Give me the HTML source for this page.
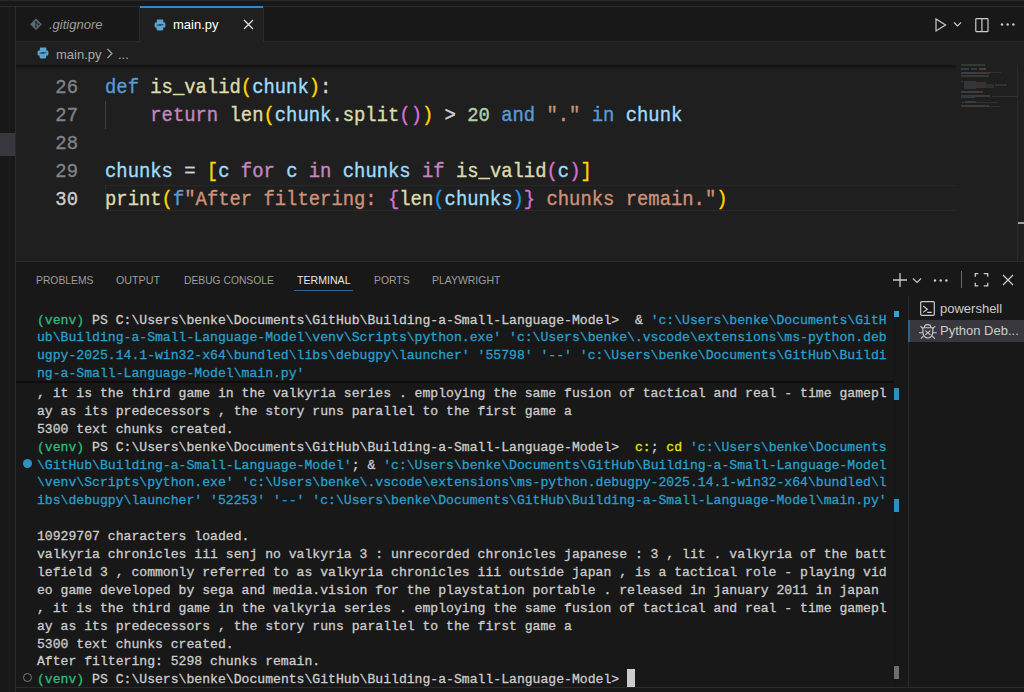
<!DOCTYPE html>
<html><head><meta charset="utf-8">
<style>
*{margin:0;padding:0;box-sizing:border-box}
html,body{width:1024px;height:692px;overflow:hidden;background:#181818;font-family:"Liberation Sans",sans-serif}
.a{position:absolute}
.mono{font-family:"Liberation Mono",monospace;white-space:pre}
#ed .ln{position:absolute;left:16px;width:62px;text-align:right;font-size:18.87px;line-height:28px;transform:scaleY(1.09);transform-origin:0 19.5px;color:#7d838a}
#ed .cl{position:absolute;left:105px;font-size:18.87px;line-height:28px;transform:scaleY(1.09);transform-origin:0 19.5px;color:#cccccc}
.k{color:#569cd6}.f{color:#dcdcaa}.v{color:#9cdcfe}.c{color:#c586c0}.n{color:#b5cea8}.s{color:#ce9178}.o{color:#d4d4d4}
.b1{color:#ffd700}.b2{color:#da70d6}.b3{color:#179fff}
#term .tl{position:absolute;left:37px;font-size:13.12px;line-height:17.8px;color:#cccccc;height:17.8px;-webkit-text-stroke:0.3px currentColor}
#term .g{color:#2fba7c}#term .cy{color:#2a9ecb}#term .y{color:#e5e510}
.pt{position:absolute;top:273.5px;font-size:11.5px;line-height:13px;color:#9d9d9d;white-space:nowrap;transform-origin:0 50%}
</style></head><body>
<!-- top strip -->
<div class="a" style="left:0;top:0;width:1024px;height:6px;background:#181818"></div>
<div class="a" style="left:0;top:0;width:1024px;height:1px;background:#292929"></div>
<div class="a" style="left:0;top:6px;width:1024px;height:1px;background:#2b2b2b"></div>
<!-- left strip -->
<div class="a" style="left:0;top:7px;width:15px;height:685px;background:#181818"></div>
<div class="a" style="left:9px;top:7px;width:1px;height:685px;background:#1e1e1e"></div>
<div class="a" style="left:15px;top:6px;width:1px;height:686px;background:#2b2b2b"></div>
<div class="a" style="left:0;top:133px;width:15px;height:23px;background:#37373d"></div>

<!-- tab bar -->
<div class="a" style="left:16px;top:7px;width:1008px;height:35px;background:#181818"></div>
<div class="a" style="left:16px;top:41px;width:1008px;height:1px;background:#2b2b2b"></div>
<div class="a" style="left:139px;top:7px;width:1px;height:35px;background:#2b2b2b"></div>
<div class="a" style="left:140px;top:6px;width:123px;height:36px;background:#1f1f1f"></div>
<div class="a" style="left:140px;top:6px;width:123px;height:2px;background:#3c85c4"></div>
<div class="a" style="left:263px;top:7px;width:1px;height:35px;background:#2b2b2b"></div>
<!-- git icon -->
<svg class="a" style="left:29px;top:18px" width="14" height="13" viewBox="0 0 14 13">
<path d="M7 0.6 L12.9 6.3 L7 12.1 L1.1 6.3 Z" fill="#5a6a72"/>
<path d="M7 3.8V8.8M7 3.8L9.7 6.4" stroke="#1c2124" stroke-width="1"/>
<circle cx="7" cy="3.9" r="0.9" fill="#1c2124"/><circle cx="7" cy="8.7" r="0.9" fill="#1c2124"/><circle cx="9.7" cy="6.4" r="0.9" fill="#1c2124"/>
</svg>
<div class="a" style="left:49px;top:17px;font-size:13px;line-height:16px;color:#9d9d9d;font-style:italic">.gitignore</div>
<!-- python icon tab -->
<svg class="a" style="left:154px;top:18.5px" width="12" height="12" viewBox="0 0 12 12">
<path d="M4 0.6H8.2C9 0.6 9.4 1.1 9.4 1.9V4.6C9.4 5.2 9 5.6 8.4 5.6H5.4C4.8 5.6 4.4 6 4.4 6.6V8.6H1.9C1.1 8.6 0.6 8 0.6 7.2V4.8C0.6 4 1.1 3.4 1.9 3.4H2.8V1.8C2.8 1.1 3.3 0.6 4 0.6Z" fill="#5ba6d1"/>
<path d="M8 11.4H3.8C3 11.4 2.6 10.9 2.6 10.1V7.4C2.6 6.8 3 6.4 3.6 6.4H6.6C7.2 6.4 7.6 6 7.6 5.4V3.4H10.1C10.9 3.4 11.4 4 11.4 4.8V7.2C11.4 8 10.9 8.6 10.1 8.6H9.2V10.2C9.2 10.9 8.7 11.4 8 11.4Z" fill="#5ba6d1"/>
<path d="M2.6 6.2L5 5.9H7L9.4 5.7" stroke="#1d3a4c" stroke-width="0.9" fill="none"/>
</svg>
<div class="a" style="left:173px;top:17px;font-size:13px;line-height:16px;color:#ffffff">main.py</div>
<svg class="a" style="left:243px;top:19px" width="11" height="11" viewBox="0 0 11 11"><path d="M1 1L10 10M10 1L1 10" stroke="#e0e0e0" stroke-width="1.3"/></svg>
<!-- editor actions -->
<svg class="a" style="left:933px;top:17px" width="14" height="15" viewBox="0 0 14 15"><path d="M3 1.9L12.6 7.9L3 13.9Z" fill="none" stroke="#cccccc" stroke-width="1.2"/></svg>
<svg class="a" style="left:953px;top:21px" width="9" height="7" viewBox="0 0 9 7"><path d="M1 1.5L4.5 5L8 1.5" fill="none" stroke="#cccccc" stroke-width="1.1"/></svg>
<svg class="a" style="left:973px;top:17px" width="16" height="16" viewBox="0 0 16 16"><rect x="2.8" y="1.7" width="12.2" height="13" rx="0.8" fill="none" stroke="#cccccc" stroke-width="1.2"/><path d="M8.9 1.7V14.7" stroke="#cccccc" stroke-width="1.2"/></svg>
<svg class="a" style="left:1000px;top:22px" width="16" height="5" viewBox="0 0 16 5"><circle cx="2" cy="2.5" r="1.2" fill="#cccccc"/><circle cx="7.7" cy="2.5" r="1.2" fill="#cccccc"/><circle cx="13.4" cy="2.5" r="1.2" fill="#cccccc"/></svg>

<!-- breadcrumbs -->
<div class="a" style="left:16px;top:42px;width:1008px;height:23px;background:#1f1f1f"></div>
<svg class="a" style="left:37px;top:47px" width="12" height="12" viewBox="0 0 12 12">
<path d="M4 0.6H8.2C9 0.6 9.4 1.1 9.4 1.9V4.6C9.4 5.2 9 5.6 8.4 5.6H5.4C4.8 5.6 4.4 6 4.4 6.6V8.6H1.9C1.1 8.6 0.6 8 0.6 7.2V4.8C0.6 4 1.1 3.4 1.9 3.4H2.8V1.8C2.8 1.1 3.3 0.6 4 0.6Z" fill="#5ba6d1"/>
<path d="M8 11.4H3.8C3 11.4 2.6 10.9 2.6 10.1V7.4C2.6 6.8 3 6.4 3.6 6.4H6.6C7.2 6.4 7.6 6 7.6 5.4V3.4H10.1C10.9 3.4 11.4 4 11.4 4.8V7.2C11.4 8 10.9 8.6 10.1 8.6H9.2V10.2C9.2 10.9 8.7 11.4 8 11.4Z" fill="#5ba6d1"/>
<path d="M2.6 6.2L5 5.9H7L9.4 5.7" stroke="#1d3a4c" stroke-width="0.9" fill="none"/>
</svg>
<div class="a" style="left:56px;top:47px;font-size:13px;line-height:16px;color:#a9a9a9">main.py</div>
<svg class="a" style="left:106px;top:48px" width="8" height="11" viewBox="0 0 8 11"><path d="M1.5 1L6 5.5L1.5 10" fill="none" stroke="#a9a9a9" stroke-width="1.1"/></svg>
<div class="a" style="left:118px;top:47px;font-size:13px;line-height:16px;color:#a9a9a9">...</div>

<!-- editor -->
<div id="ed" class="a mono" style="left:16px;top:65px;width:1008px;height:196px;background:#1f1f1f;overflow:hidden">
</div>
<div id="edc" class="a mono" style="left:0;top:0;width:1024px;height:261px;pointer-events:none;-webkit-text-stroke:0.35px currentColor">
<!-- current line box -->
<div class="a" style="left:105px;top:185px;width:850px;height:26px;border:1px solid #282828;border-right:none"></div>
<!-- indent guide -->
<div class="a" style="left:105px;top:101px;width:1px;height:28px;background:#404040"></div>
<div class="ln a" style="position:absolute;left:16px;top:73.7px;width:62px;text-align:right;font-size:18.87px;line-height:28px;transform:scaleY(1.09);transform-origin:0 19.5px;color:#7d838a">26</div>
<div class="a" style="left:16px;top:101.7px;width:62px;text-align:right;font-size:18.87px;line-height:28px;transform:scaleY(1.09);transform-origin:0 19.5px;color:#7d838a">27</div>
<div class="a" style="left:16px;top:129.7px;width:62px;text-align:right;font-size:18.87px;line-height:28px;transform:scaleY(1.09);transform-origin:0 19.5px;color:#7d838a">28</div>
<div class="a" style="left:16px;top:157.7px;width:62px;text-align:right;font-size:18.87px;line-height:28px;transform:scaleY(1.09);transform-origin:0 19.5px;color:#7d838a">29</div>
<div class="a" style="left:16px;top:185.7px;width:62px;text-align:right;font-size:18.87px;line-height:28px;transform:scaleY(1.09);transform-origin:0 19.5px;color:#cccccc">30</div>
<div class="a" style="left:105px;top:73.7px;font-size:18.87px;line-height:28px;transform:scaleY(1.09);transform-origin:0 19.5px;color:#d4d4d4"><span class="k">def</span> <span class="f">is_valid</span><span class="b1">(</span><span class="v">chunk</span><span class="b1">)</span>:</div>
<div class="a" style="left:105px;top:101.7px;font-size:18.87px;line-height:28px;transform:scaleY(1.09);transform-origin:0 19.5px;color:#d4d4d4">    <span class="c">return</span> <span class="f">len</span><span class="b1">(</span><span class="v">chunk</span>.<span class="f">split</span><span class="b2">()</span><span class="b1">)</span> &gt; <span class="n">20</span> <span class="k">and</span> <span class="s">"."</span> <span class="k">in</span> <span class="v">chunk</span></div>
<div class="a" style="left:105px;top:157.7px;font-size:18.87px;line-height:28px;transform:scaleY(1.09);transform-origin:0 19.5px;color:#d4d4d4"><span class="v">chunks</span> = <span class="b1">[</span><span class="v">c</span> <span class="c">for</span> <span class="v">c</span> <span class="c">in</span> <span class="v">chunks</span> <span class="c">if</span> <span class="f">is_valid</span><span class="b2">(</span><span class="v">c</span><span class="b2">)</span><span class="b1">]</span></div>
<div class="a" style="left:105px;top:185.7px;font-size:18.87px;line-height:28px;transform:scaleY(1.09);transform-origin:0 19.5px;color:#d4d4d4"><span class="f">print</span><span class="b1">(</span><span class="k">f</span><span class="s">"After filtering: </span><span class="b2">{</span><span class="f">len</span><span class="b3">(</span><span class="v">chunks</span><span class="b3">)</span><span class="b2">}</span><span class="s"> chunks remain."</span><span class="b1">)</span></div>
<!-- minimap -->
<div class="a" style="left:0;top:0;opacity:.65">
<div class="a" style="left:961px;top:64px;width:24px;height:2px;background:#3d4a38"></div>
<div class="a" style="left:961px;top:68px;width:8px;height:2px;background:#3a4a5a"></div>
<div class="a" style="left:971px;top:68px;width:6px;height:2px;background:#444"></div>
<div class="a" style="left:979px;top:68px;width:7px;height:2px;background:#555"></div>
<div class="a" style="left:961px;top:72px;width:15px;height:2px;background:#505050"></div>
<div class="a" style="left:976px;top:72px;width:14px;height:2px;background:#56453d"></div>
<div class="a" style="left:990px;top:72px;width:11px;height:1px;background:#3a3a3a"></div>
<div class="a" style="left:961px;top:75px;width:28px;height:2px;background:#444"></div>
<div class="a" style="left:961px;top:81px;width:2px;height:1px;background:#555"></div>
<div class="a" style="left:964px;top:81px;width:12px;height:8px;background:#3d4450"></div>
<div class="a" style="left:976px;top:82px;width:10px;height:6px;background:#4a3d38"></div>
<div class="a" style="left:986px;top:84px;width:8px;height:4px;background:#3a3a3a"></div>
<div class="a" style="left:995px;top:84px;width:12px;height:2px;background:#36412f"></div>
<div class="a" style="left:961px;top:91px;width:22px;height:2px;background:#4e4e4e"></div>
<div class="a" style="left:961px;top:95px;width:14px;height:3px;background:#3d4a55"></div>
<div class="a" style="left:975px;top:95px;width:15px;height:2px;background:#4a4a4a"></div>
<div class="a" style="left:992px;top:96px;width:25px;height:1px;background:#3a3f44"></div>
<div class="a" style="left:962px;top:102px;width:2px;height:1px;background:#555"></div>
<div class="a" style="left:965px;top:101px;width:11px;height:2px;background:#4a4a4a"></div>
<div class="a" style="left:976px;top:102px;width:22px;height:1px;background:#3a3a3a"></div>
<div class="a" style="left:961px;top:105px;width:28px;height:2px;background:#4c4c4c"></div>
<div class="a" style="left:989px;top:106px;width:11px;height:1px;background:#3a3a3a"></div>
</div>
<!-- scroll shadow -->
<div class="a" style="left:16px;top:65px;width:940px;height:5px;background:linear-gradient(rgba(0,0,0,.38),rgba(0,0,0,.3) 40%,rgba(0,0,0,0))"></div>
<!-- scrollbar border -->
<div class="a" style="left:1017px;top:65px;width:1px;height:196px;background:#2b2b2b"></div>
<div class="a" style="left:1018px;top:222px;width:6px;height:2px;background:#a0a0a0"></div>
</div>

<!-- panel -->
<div class="a" style="left:16px;top:261px;width:1008px;height:1px;background:#2b2b2b"></div>
<div class="pt" style="left:35.9px;transform:scaleX(0.898)">PROBLEMS</div>
<div class="pt" style="left:116.1px;transform:scaleX(0.932)">OUTPUT</div>
<div class="pt" style="left:183.5px;transform:scaleX(0.895)">DEBUG CONSOLE</div>
<div class="pt" style="left:296.5px;color:#e7e7e7;transform:scaleX(0.921)">TERMINAL</div>
<div class="a" style="left:294px;top:289.5px;width:59px;height:1.5px;background:#2a64a0"></div>
<div class="pt" style="left:374.0px;transform:scaleX(0.902)">PORTS</div>
<div class="pt" style="left:431.5px;transform:scaleX(0.909)">PLAYWRIGHT</div>
<!-- panel actions -->
<svg class="a" style="left:892px;top:272px" width="16" height="16" viewBox="0 0 16 16"><path d="M8 1V15M1 8H15" stroke="#cccccc" stroke-width="1.3"/></svg>
<svg class="a" style="left:912px;top:277px" width="10" height="7" viewBox="0 0 10 7"><path d="M1 1.5L5 5.5L9 1.5" fill="none" stroke="#cccccc" stroke-width="1.1"/></svg>
<svg class="a" style="left:933px;top:278px" width="16" height="5" viewBox="0 0 16 5"><circle cx="2" cy="2.5" r="1.2" fill="#cccccc"/><circle cx="7.7" cy="2.5" r="1.2" fill="#cccccc"/><circle cx="13.4" cy="2.5" r="1.2" fill="#cccccc"/></svg>
<div class="a" style="left:960.5px;top:271px;width:1.2px;height:17px;background:#6a6a6a"></div>
<svg class="a" style="left:973px;top:272px" width="16" height="16" viewBox="0 0 16 16"><path d="M2.3 4.8V1.6H5.3M10.7 1.6H14.7V4.8M14.7 10.7V13.9H10.7M5.3 13.9H2.3V10.7" fill="none" stroke="#cccccc" stroke-width="1.3"/></svg>
<svg class="a" style="left:1002px;top:274px" width="12" height="12" viewBox="0 0 12 12"><path d="M1 1L11 11M11 1L1 11" stroke="#cccccc" stroke-width="1.3"/></svg>

<!-- terminal -->
<div id="term" class="a mono" style="left:0;top:0;width:1024px;height:692px">
<div class="tl" style="top:311.5px"><span class="g">(venv)</span> PS C:\Users\benke\Documents\GitHub\Building-a-Small-Language-Model&gt;  &amp; <span class="cy">'c:\Users\benke\Documents\GitH</span></div>
<div class="tl cy" style="top:329.2px">ub\Building-a-Small-Language-Model\venv\Scripts\python.exe' 'c:\Users\benke\.vscode\extensions\ms-python.deb</div>
<div class="tl cy" style="top:346.9px">ugpy-2025.14.1-win32-x64\bundled\libs\debugpy\launcher' '55798' '--' 'c:\Users\benke\Documents\GitHub\Buildi</div>
<div class="tl cy" style="top:364.6px">ng-a-Small-Language-Model\main.py'</div>
<div class="a" style="left:16px;top:381px;width:878px;height:2px;background:#0c0c0c"></div>
<div class="tl" style="top:384.90px">, it is the third game in the valkyria series . employing the same fusion of tactical and real - time gamepl</div>
<div class="tl" style="top:402.80px">ay as its predecessors , the story runs parallel to the first game a</div>
<div class="tl" style="top:420.70px">5300 text chunks created.</div>
<div class="tl" style="top:438.60px"><span class="g">(venv)</span> PS C:\Users\benke\Documents\GitHub\Building-a-Small-Language-Model&gt;  <span class="y">c:</span>; <span class="y">cd</span> <span class="cy">'c:\Users\benke\Documents</span></div>
<div class="tl cy" style="top:456.50px">\GitHub\Building-a-Small-Language-Model'<span style="color:#cccccc">; &amp; </span>'c:\Users\benke\Documents\GitHub\Building-a-Small-Language-Model</div>
<div class="tl cy" style="top:474.40px">\venv\Scripts\python.exe' 'c:\Users\benke\.vscode\extensions\ms-python.debugpy-2025.14.1-win32-x64\bundled\l</div>
<div class="tl cy" style="top:492.30px">ibs\debugpy\launcher' '52253' '--' 'c:\Users\benke\Documents\GitHub\Building-a-Small-Language-Model\main.py'</div>
<div class="tl" style="top:528.10px">10929707 characters loaded.</div>
<div class="tl" style="top:546.00px">valkyria chronicles iii senj no valkyria 3 : unrecorded chronicles japanese : 3 , lit . valkyria of the batt</div>
<div class="tl" style="top:563.90px">lefield 3 , commonly referred to as valkyria chronicles iii outside japan , is a tactical role - playing vid</div>
<div class="tl" style="top:581.80px">eo game developed by sega and media.vision for the playstation portable . released in january 2011 in japan</div>
<div class="tl" style="top:599.70px">, it is the third game in the valkyria series . employing the same fusion of tactical and real - time gamepl</div>
<div class="tl" style="top:617.60px">ay as its predecessors , the story runs parallel to the first game a</div>
<div class="tl" style="top:635.50px">5300 text chunks created.</div>
<div class="tl" style="top:653.40px">After filtering: 5298 chunks remain.</div>
<div class="tl" style="top:671.30px"><span class="g">(venv)</span> PS C:\Users\benke\Documents\GitHub\Building-a-Small-Language-Model&gt; </div>
<div class="a" style="left:627px;top:669px;width:8px;height:18px;background:#cccccc"></div>
<!-- decorations -->
<div class="a" style="left:22.5px;top:458.5px;width:9px;height:9px;border-radius:50%;background:#2f8fc4"></div>
<div class="a" style="left:22.5px;top:673px;width:9px;height:9px;border-radius:50%;border:1.5px solid #7a7a7a"></div>
<!-- overview ruler marks -->
<div class="a" style="left:894px;top:317px;width:1px;height:370px;background:#141414"></div>
<div class="a" style="left:894px;top:310.5px;width:5px;height:6px;background:#3a9fd0"></div>
<div class="a" style="left:894px;top:388px;width:5px;height:12px;background:#2e8fbf"></div>
<div class="a" style="left:894px;top:499px;width:5px;height:13px;background:#2e8fbf"></div>
<div class="a" style="left:894px;top:666px;width:5px;height:13px;background:#6e6e6e"></div>
</div>

<!-- terminal tabs list -->
<div class="a" style="left:908px;top:296px;width:1px;height:391px;background:#2b2b2b"></div>
<svg class="a" style="left:920px;top:301px" width="15" height="15" viewBox="0 0 15 15"><rect x="0.7" y="0.7" width="13.6" height="13.6" rx="1" fill="none" stroke="#cccccc" stroke-width="1.2"/><path d="M3.2 5L7.3 8.2L3.2 11.4M7.2 11.4H11.7" fill="none" stroke="#cccccc" stroke-width="1.2"/></svg>
<div class="a" style="left:940px;top:301px;font-size:13px;line-height:16px;color:#cccccc">powershell</div>
<div class="a" style="left:909px;top:320px;width:115px;height:22px;background:#37373d"></div>
<div class="a" style="left:908px;top:320px;width:2px;height:22px;background:#2d5f8f"></div>
<svg class="a" style="left:914px;top:320px" width="26" height="24" viewBox="0 0 26 24"><g fill="none" stroke="#cccccc" stroke-width="1.15"><path d="M10.4 7.4C10.4 3.7 16.9 3.7 16.9 7.4"/><path d="M8.9 7.7H18.8V12C18.8 15.6 16.5 18 13.85 18C11.2 18 8.9 15.6 8.9 12Z"/><path d="M11.3 10.6L16.4 14.9M16.4 10.6L11.3 14.9M6.4 6.2L8.8 8.4M4.9 12.7H8.8M6.8 18.7L9.5 16.2M21.3 6.2L18.9 8.4M22.8 12.7H18.9M20.9 18.7L18.2 16.2"/></g></svg>
<div class="a" style="left:940px;top:323px;font-size:13px;line-height:16px;color:#cccccc">Python Deb...</div>

<!-- bottom border -->
<div class="a" style="left:16px;top:687px;width:1008px;height:1px;background:#2b2b2b"></div>
</body></html>
